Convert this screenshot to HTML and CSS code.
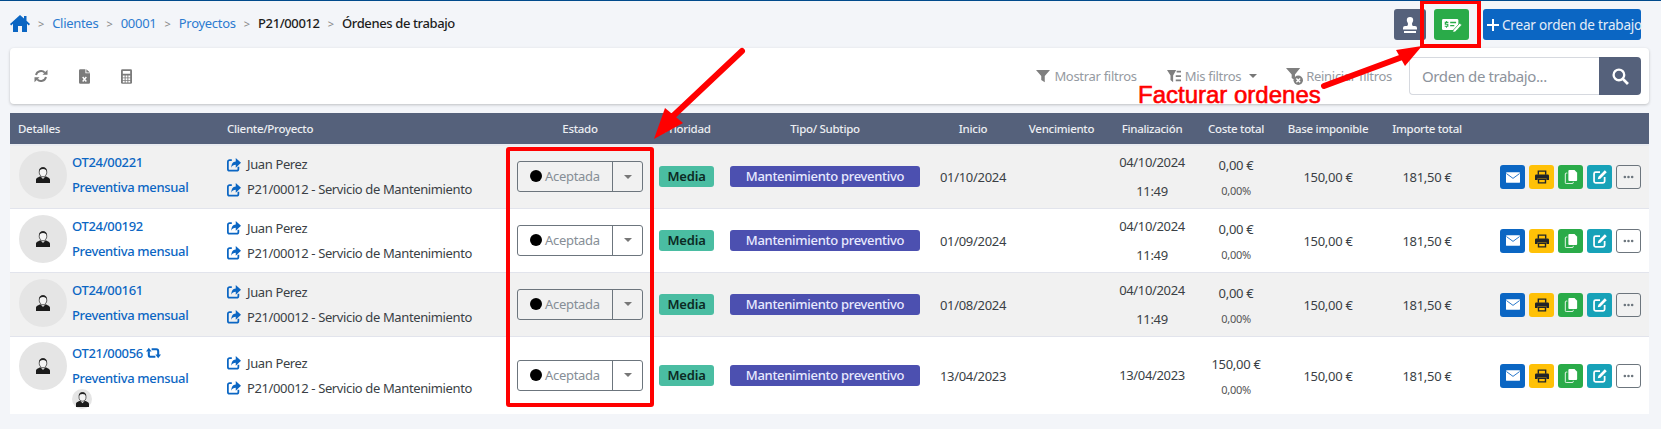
FILE: index.html
```html
<!DOCTYPE html>
<html lang="es">
<head>
    <meta charset="UTF-8">
    <meta name="viewport" content="width=device-width, initial-scale=1.0">
    <title>Órdenes de trabajo</title>
    <link rel="stylesheet" href="styles.css">
</head>
<body>

<svg class="sprite">
    <symbol id="i-home" viewBox="0 0 20 17"><path fill="currentColor" d="M10 0L0 9l1.2 1.4L3 8.8V17h5v-6h4v6h5V8.8l1.8 1.6L20 9l-3.5-3.2V1H14v2.6z"/></symbol>
    <symbol id="i-share" viewBox="0 0 16 16"><path fill="none" stroke="currentColor" stroke-width="2" d="M5.5 2.5H3A2 2 0 0 0 1 4.500v8A2 2 0 0 0 3 14.500h8a2 2 0 0 0 2-2V10"/><path fill="currentColor" d="M10 0l6 5.500-6 5.500V7.800C7.500 7.800 5.800 8.800 5 11c-.2-4 1.700-6.800 5-7z"/></symbol>
    <symbol id="i-retweet" viewBox="0 0 16 14"><path fill="none" stroke="currentColor" stroke-width="2.200" d="M3 5v4a2 2 0 0 0 2 2h5M13 9V5a2 2 0 0 0-2-2H6"/><path fill="currentColor" d="M0 5.500L3 1.500l3 4zM10 8.500l3 4 3-4z"/></symbol>
    <symbol id="i-refresh" viewBox="0 0 14 14"><path fill="none" stroke="currentColor" stroke-width="2" d="M2 6a5.200 5.200 0 0 1 8.800-2.400M12 8a5.200 5.200 0 0 1-8.800 2.400"/><path fill="currentColor" d="M13.500.8v5h-5zM.5 13.200v-5h5z"/></symbol>
    <symbol id="i-xls" viewBox="0 0 12 16"><path fill="currentColor" d="M0 1.500A1.500 1.500 0 0 1 1.500 0H7v4.500h5v10a1.500 1.500 0 0 1-1.500 1.500h-9A1.500 1.500 0 0 1 0 14.500zM8 0l4 3.600H8z"/><path fill="none" stroke="#fff" stroke-width="1.500" d="M4 8.500l4 5M8 8.500l-4 5"/></symbol>
    <symbol id="i-calc" viewBox="0 0 12 16"><rect width="12" height="16" rx="1.500" fill="currentColor"/><path fill="#fff" d="M2 2h8v3H2zM2 7h2v2H2zM5 7h2v2H5zM8 7h2v2H8zM2 10h2v2H2zM5 10h2v2H5zM8 10h2v2H8zM2 13h2v1.500H2zM5 13h2v1.500H5zM8 13h2v1.500H8z"/></symbol>
    <symbol id="i-filter" viewBox="0 0 16 14"><path fill="currentColor" d="M0 0h16L10 7v7L6 11.500V7z"/></symbol>
    <symbol id="i-filter-list" viewBox="0 0 16 14"><path fill="currentColor" d="M0 0h10.500L7 6.500V14l-3-2.500v-5zM11 1h5v2h-5zM10 6h6v2h-6zM10 11h6v2h-6z"/></symbol>
    <symbol id="i-filter-x" viewBox="0 0 18 18"><path fill="currentColor" d="M0 0h15L9.500 7v6L6 10.500V7z"/><circle cx="13" cy="13" r="5" fill="currentColor"/><path fill="none" stroke="#fff" stroke-width="1.500" d="M11 11l4 4M15 11l-4 4"/></symbol>
    <symbol id="i-stamp" viewBox="0 0 14 16"><path fill="currentColor" d="M7 0a3.200 3.200 0 0 0-3.200 3.200C3.800 4.800 5 5.500 5 7c0 .8-.3 1.500-.8 2H2a2 2 0 0 0-2 2v1.500h14V11a2 2 0 0 0-2-2H9.800C9.300 8.500 9 7.800 9 7c0-1.500 1.200-2.200 1.200-3.800A3.200 3.200 0 0 0 7 0zM1 14h12v2H1z"/></symbol>
    <symbol id="i-invoice" viewBox="0 0 22 15"><rect y="1" width="18" height="12" rx="1.500" fill="#fff"/><path fill="#2aab49" d="M9 4h6.500v1.500H9zM9 7.500h4.500V9H9zM4.500 3h1v1h1.500v1.200H4.600v1h2.400v3.300H5.500v1h-1v-1H3V8.300h2.700v-1H3V4h1.500z"/><path fill="#fff" stroke="#2aab49" stroke-width=".8" d="M12.500 13l7-7.500 2.200 2-7 7.500-3 .7z"/></symbol>
    <symbol id="i-mail" viewBox="0 0 16 12"><rect width="16" height="12" rx="1" fill="#fff"/><path fill="none" stroke="#0b66c3" d="M.5 1.500L8 7l7.500-5.500"/></symbol>
    <symbol id="i-print" viewBox="0 0 16 15"><path fill="none" stroke="#212529" stroke-width="1.600" d="M3.800 5V.8h8.400V5M4 10h8v4.200H4z"/><path fill="#212529" d="M1.500 4.500h13A1.500 1.500 0 0 1 16 6v5h-3V9H3v2H0V6a1.500 1.500 0 0 1 1.500-1.500z"/></symbol>
    <symbol id="i-copy" viewBox="0 0 14 16"><path fill="#fff" d="M5 0h6l3 3v8.500a1 1 0 0 1-1 1H5a1 1 0 0 1-1-1V1a1 1 0 0 1 1-1z"/><path fill="none" stroke="#fff" d="M2.800 3.500H1.500a1 1 0 0 0-1 1V14.500a1 1 0 0 0 1 1h7a1 1 0 0 0 1-1V13.500"/></symbol>
    <symbol id="i-edit" viewBox="0 0 16 16"><path fill="none" stroke="#fff" stroke-width="2" d="M8 2.500H3a1.800 1.800 0 0 0-1.800 1.800v8.500A1.800 1.800 0 0 0 3 14.600h8.500a1.800 1.800 0 0 0 1.800-1.800V8"/><path fill="#fff" d="M13.500.4l2.200 2.200-7.300 7.300-3 .8.800-3z"/></symbol>
    <symbol id="i-dots" viewBox="0 0 12 4"><circle cx="2" cy="2" r="1.400" fill="#6c757d"/><circle cx="6" cy="2" r="1.400" fill="#6c757d"/><circle cx="10" cy="2" r="1.400" fill="#6c757d"/></symbol>
    <symbol id="i-user" viewBox="0 0 14 16"><path fill="#1b1b1b" d="M0 16v-3.200C0 10.800 3 10 4.500 9.300L7 12l2.500-2.700c1.500.7 4.500 1.500 4.500 3.500V16z"/><ellipse cx="7" cy="5.200" rx="3.800" ry="4.600" fill="#f4f4f4" stroke="#222" stroke-width=".7"/><path fill="#222" d="M3.200 4.500C2.800 1.500 5 .3 7 .3s4.200 1.200 3.800 4.200C10.300 2.800 9 2 7 2S3.700 2.800 3.200 4.500z"/></symbol>
</svg>

<div class="topbar">
    <nav class="breadcrumb">
        <svg class="home"><use href="#i-home"/></svg>
        <span class="sep">&gt;</span><a>Clientes</a>
        <span class="sep">&gt;</span><a>00001</a>
        <span class="sep">&gt;</span><a>Proyectos</a>
        <span class="sep">&gt;</span><strong>P21/00012</strong>
        <span class="sep">&gt;</span><strong>Órdenes de trabajo</strong>
    </nav>
    <div class="top-actions">
        <button class="btn btn-slate"><svg class="ic-stamp"><use href="#i-stamp"/></svg></button>
        <button class="btn btn-green"><svg class="ic-invoice"><use href="#i-invoice"/></svg></button>
        <button class="btn btn-blue btn-create"><span class="plus"></span>Crear orden de trabajo</button>
    </div>
</div>

<div class="toolbar">
    <div class="tools">
        <svg class="ic-refresh"><use href="#i-refresh"/></svg>
        <svg class="ic-file"><use href="#i-xls"/></svg>
        <svg class="ic-file"><use href="#i-calc"/></svg>
    </div>
    <div class="filters">
        <span class="filter show"><svg class="ic-filter"><use href="#i-filter"/></svg>Mostrar filtros</span>
        <span class="filter mine"><svg class="ic-filter"><use href="#i-filter-list"/></svg>Mis filtros<i class="caret"></i></span>
        <span class="filter reset"><svg class="ic-filter-x"><use href="#i-filter-x"/></svg>Reiniciar filtros</span>
        <div class="search">
            <input type="text" placeholder="Orden de trabajo...">
            <button class="search-btn">
                <svg viewBox="0 0 16 16"><circle cx="6.500" cy="6.500" r="5" fill="none" stroke="#fff" stroke-width="2.200"/><path stroke="#fff" stroke-width="2.600" d="M10 10l5 5"/></svg>
            </button>
        </div>
    </div>
</div>

<table class="orders">
    <colgroup>
        <col class="c-det"><col class="c-cli"><col class="c-est"><col class="c-pri"><col class="c-tip"><col class="c-ini">
        <col class="c-ven"><col class="c-fin"><col class="c-cos"><col class="c-bas"><col class="c-imp"><col class="c-act">
    </colgroup>
    <thead>
        <tr>
            <th class="left">Detalles</th>
            <th class="left">Cliente/Proyecto</th>
            <th>Estado</th>
            <th>Prioridad</th>
            <th>Tipo/ Subtipo</th>
            <th>Inicio</th>
            <th>Vencimiento</th>
            <th>Finalización</th>
            <th>Coste total</th>
            <th>Base imponible</th>
            <th>Importe total</th>
            <th></th>
        </tr>
    </thead>
    <tbody>
        <tr>
            <td class="details">
                <div class="det-wrap">
                    <span class="avatar"><svg><use href="#i-user"/></svg></span>
                    <div class="det-text"><a>OT24/00221</a><a>Preventiva mensual</a></div>
                </div>
            </td>
            <td class="client">
                <div><svg><use href="#i-share"/></svg>Juan Perez</div>
                <div><svg><use href="#i-share"/></svg>P21/00012 - Servicio de Mantenimiento</div>
            </td>
            <td><div class="status"><span class="status-main"><i class="dot"></i>Aceptada</span><span class="status-arrow"><i class="caret"></i></span></div></td>
            <td><span class="badge badge-media">Media</span></td>
            <td><span class="badge badge-type">Mantenimiento preventivo</span></td>
            <td>01/10/2024</td>
            <td></td>
            <td class="date">04/10/2024<br>11:49</td>
            <td class="cost">0,00 €<small>0,00%</small></td>
            <td>150,00 €</td>
            <td>181,50 €</td>
            <td class="actions">
                <div class="act-wrap">
                    <button class="act btn-blue"><svg class="ic-mail"><use href="#i-mail"/></svg></button>
                    <button class="act btn-yellow"><svg class="ic-act"><use href="#i-print"/></svg></button>
                    <button class="act btn-green"><svg class="ic-act"><use href="#i-copy"/></svg></button>
                    <button class="act btn-teal"><svg class="ic-act"><use href="#i-edit"/></svg></button>
                    <button class="act btn-more"><svg class="ic-dots"><use href="#i-dots"/></svg></button>
                </div>
            </td>
        </tr>
        <tr>
            <td class="details">
                <div class="det-wrap">
                    <span class="avatar"><svg><use href="#i-user"/></svg></span>
                    <div class="det-text"><a>OT24/00192</a><a>Preventiva mensual</a></div>
                </div>
            </td>
            <td class="client">
                <div><svg><use href="#i-share"/></svg>Juan Perez</div>
                <div><svg><use href="#i-share"/></svg>P21/00012 - Servicio de Mantenimiento</div>
            </td>
            <td><div class="status"><span class="status-main"><i class="dot"></i>Aceptada</span><span class="status-arrow"><i class="caret"></i></span></div></td>
            <td><span class="badge badge-media">Media</span></td>
            <td><span class="badge badge-type">Mantenimiento preventivo</span></td>
            <td>01/09/2024</td>
            <td></td>
            <td class="date">04/10/2024<br>11:49</td>
            <td class="cost">0,00 €<small>0,00%</small></td>
            <td>150,00 €</td>
            <td>181,50 €</td>
            <td class="actions">
                <div class="act-wrap">
                    <button class="act btn-blue"><svg class="ic-mail"><use href="#i-mail"/></svg></button>
                    <button class="act btn-yellow"><svg class="ic-act"><use href="#i-print"/></svg></button>
                    <button class="act btn-green"><svg class="ic-act"><use href="#i-copy"/></svg></button>
                    <button class="act btn-teal"><svg class="ic-act"><use href="#i-edit"/></svg></button>
                    <button class="act btn-more"><svg class="ic-dots"><use href="#i-dots"/></svg></button>
                </div>
            </td>
        </tr>
        <tr>
            <td class="details">
                <div class="det-wrap">
                    <span class="avatar"><svg><use href="#i-user"/></svg></span>
                    <div class="det-text"><a>OT24/00161</a><a>Preventiva mensual</a></div>
                </div>
            </td>
            <td class="client">
                <div><svg><use href="#i-share"/></svg>Juan Perez</div>
                <div><svg><use href="#i-share"/></svg>P21/00012 - Servicio de Mantenimiento</div>
            </td>
            <td><div class="status"><span class="status-main"><i class="dot"></i>Aceptada</span><span class="status-arrow"><i class="caret"></i></span></div></td>
            <td><span class="badge badge-media">Media</span></td>
            <td><span class="badge badge-type">Mantenimiento preventivo</span></td>
            <td>01/08/2024</td>
            <td></td>
            <td class="date">04/10/2024<br>11:49</td>
            <td class="cost">0,00 €<small>0,00%</small></td>
            <td>150,00 €</td>
            <td>181,50 €</td>
            <td class="actions">
                <div class="act-wrap">
                    <button class="act btn-blue"><svg class="ic-mail"><use href="#i-mail"/></svg></button>
                    <button class="act btn-yellow"><svg class="ic-act"><use href="#i-print"/></svg></button>
                    <button class="act btn-green"><svg class="ic-act"><use href="#i-copy"/></svg></button>
                    <button class="act btn-teal"><svg class="ic-act"><use href="#i-edit"/></svg></button>
                    <button class="act btn-more"><svg class="ic-dots"><use href="#i-dots"/></svg></button>
                </div>
            </td>
        </tr>
        <tr>
            <td class="details">
                <div class="det-wrap">
                    <span class="avatar"><svg><use href="#i-user"/></svg></span>
                    <div class="det-text">
                        <a>OT21/00056 <svg class="ic-retweet"><use href="#i-retweet"/></svg></a>
                        <a>Preventiva mensual</a>
                        <span class="avatar avatar-sm"><svg><use href="#i-user"/></svg></span>
                    </div>
                </div>
            </td>
            <td class="client">
                <div><svg><use href="#i-share"/></svg>Juan Perez</div>
                <div><svg><use href="#i-share"/></svg>P21/00012 - Servicio de Mantenimiento</div>
            </td>
            <td><div class="status"><span class="status-main"><i class="dot"></i>Aceptada</span><span class="status-arrow"><i class="caret"></i></span></div></td>
            <td><span class="badge badge-media">Media</span></td>
            <td><span class="badge badge-type">Mantenimiento preventivo</span></td>
            <td>13/04/2023</td>
            <td></td>
            <td class="date">13/04/2023</td>
            <td class="cost">150,00 €<small>0,00%</small></td>
            <td>150,00 €</td>
            <td>181,50 €</td>
            <td class="actions">
                <div class="act-wrap">
                    <button class="act btn-blue"><svg class="ic-mail"><use href="#i-mail"/></svg></button>
                    <button class="act btn-yellow"><svg class="ic-act"><use href="#i-print"/></svg></button>
                    <button class="act btn-green"><svg class="ic-act"><use href="#i-copy"/></svg></button>
                    <button class="act btn-teal"><svg class="ic-act"><use href="#i-edit"/></svg></button>
                    <button class="act btn-more"><svg class="ic-dots"><use href="#i-dots"/></svg></button>
                </div>
            </td>
        </tr>
    </tbody>
</table>

<!-- red marks drawn over the capture -->
<svg class="marks" viewBox="0 0 1661 429">
    <rect x="508" y="149" width="144" height="256" rx="1" fill="none" stroke="#f00" stroke-width="4"/>
    <rect x="1422" y="2" width="57" height="44" fill="none" stroke="#f00" stroke-width="4"/>
    <path d="M742 51L672 117" stroke="#f00" stroke-width="6" stroke-linecap="round"/>
    <path d="M654 139L665 108L683 123z" fill="#f00"/>
    <path d="M1324 86L1405 56" stroke="#f00" stroke-width="6" stroke-linecap="round"/>
    <path d="M1422 46L1396 50L1405 66z" fill="#f00"/>
</svg>
<span class="mark-label">Facturar ordenes</span>

</body>
</html>
```

FILE: styles.css
```css
* {
    box-sizing: border-box;
}
body {
    margin: 0;
    padding: 0 12px 14px 10px;
    background-color: #f3f5f9;
    border-top: 1px solid #004a8c;
    font-family: "Noto Sans", sans-serif;
    font-size: 13px;
    letter-spacing: -0.3px;
    color: #343a40;
    position: relative;
}
svg {
    display: block;
}
button {
    border: none;
    padding: 0;
    font: inherit;
    letter-spacing: inherit;
    display: flex;
    align-items: center;
    justify-content: center;
}
.sprite {
    display: none;
}

/* top bar */
.topbar {
    display: flex;
    justify-content: space-between;
    align-items: center;
    height: 47px;
}
.breadcrumb {
    display: flex;
    align-items: center;
    padding-bottom: 3px;
}
.breadcrumb a {
    color: #2c7bd0;
}
.breadcrumb strong {
    color: #1d1d1d;
    font-weight: 500;
    letter-spacing: -0.38px;
}
.home {
    width: 20px;
    height: 17px;
    color: #0b66c3;
    margin-right: 8px;
}
.sep {
    color: #888;
    margin: 0 8.200px;
    font-size: 11px;
}
.home + .sep {
    margin-left: 0;
}
.top-actions {
    display: flex;
    gap: 8px;
    margin-right: 8px;
}
.btn {
    height: 31px;
    border-radius: 3px;
    color: #fff;
}
.btn-slate {
    width: 32px;
    background-color: #55617b;
}
.btn-green {
    width: 35px;
    background-color: #2aab49;
}
.btn-blue {
    background-color: #0b66c3;
}
.btn-yellow {
    background-color: #ffc107;
}
.btn-teal {
    background-color: #17a2b8;
}
.btn-create {
    width: 158px;
    margin-left: 6px;
    justify-content: flex-start;
    padding-left: 4px;
    font-size: 13.500px;
    letter-spacing: -0.18px;
    white-space: nowrap;
    color: #e4edf8;
}
.plus {
    width: 12px;
    height: 12px;
    margin-right: 3px;
    flex-shrink: 0;
    background:
        linear-gradient(#fff, #fff) center / 100% 2px no-repeat,
        linear-gradient(#fff, #fff) center / 2px 100% no-repeat;
}
.ic-stamp {
    width: 14px;
    height: 16px;
}
.ic-invoice {
    width: 20px;
    height: 14px;
}

/* toolbar card */
.toolbar {
    height: 56px;
    background-color: #fff;
    border-radius: 4px;
    box-shadow: 0 1px 3px rgba(0, 0, 0, 0.22);
    display: flex;
    justify-content: space-between;
    align-items: center;
    padding: 0 8px 0 24px;
}
.tools {
    display: flex;
    align-items: center;
    gap: 31px;
    color: #7b7b7b;
}
.ic-refresh {
    width: 14px;
    height: 14px;
}
.ic-file {
    width: 11px;
    height: 15px;
}
.filters {
    display: flex;
    align-items: center;
    color: #959aa1;
}
.filter {
    display: flex;
    align-items: center;
}
.show {
    margin-right: 30px;
}
.mine {
    margin-right: 29px;
}
.reset {
    margin-right: 17px;
}
.ic-filter {
    width: 14px;
    height: 14px;
    color: #7f7f7f;
    margin-right: 4px;
}
.ic-filter-x {
    width: 17px;
    height: 17px;
    color: #7f7f7f;
    margin-right: 3px;
}
.caret {
    display: inline-block;
    width: 0;
    height: 0;
    border: 4px solid transparent;
    border-top: 4px solid #777;
    border-bottom: none;
}
.mine .caret {
    margin-left: 8px;
}
.search {
    display: flex;
    width: 232px;
    height: 38px;
}
.search input {
    width: 190px;
    height: 38px;
    border: 1px solid #d6d9df;
    border-right: none;
    border-radius: 4px 0 0 4px;
    padding: 0 12px;
    font: inherit;
    font-size: 15px;
    letter-spacing: -0.4px;
    outline: none;
}
.search input::placeholder {
    color: #8d939c;
}
.search-btn {
    width: 42px;
    height: 38px;
    background-color: #55617b;
    border-radius: 0 4px 4px 0;
}
.search-btn svg {
    width: 17px;
    height: 17px;
}

/* table */
.orders {
    width: 1639px;
    margin-top: 9px;
    table-layout: fixed;
    border-collapse: separate;
    border-spacing: 0;
    background-color: #fff;
}
.c-det { width: 209px; }
.c-cli { width: 288px; }
.c-est { width: 146px; }
.c-pri { width: 67px; }
.c-tip { width: 210px; }
.c-ini { width: 86px; }
.c-ven { width: 91px; }
.c-fin { width: 90px; }
.c-cos { width: 78px; }
.c-bas { width: 106px; }
.c-imp { width: 92px; }
.c-act { width: 176px; }
.orders th {
    height: 33px;
    background-color: #55617b;
    border-bottom: 2px solid #e9ebf0;
    color: #eceef2;
    font-size: 11.500px;
    font-weight: 500;
    letter-spacing: -0.3px;
    text-align: center;
    padding: 0;
}
.orders th.left {
    text-align: left;
}
.orders th:first-child {
    padding-left: 8px;
}
.orders th:nth-child(2) {
    padding-left: 8px;
}
.orders td {
    padding: 0;
    text-align: center;
    vertical-align: middle;
    border-bottom: 1px solid #e2e4ec;
    color: #3a3f45;
}
.orders tbody tr:nth-child(odd) td {
    background-color: #f1f1f1;
}
.orders tbody tr:last-child td {
    background-color: #fff;
    border-bottom: none;
}
.orders td.details {
    text-align: left;
    vertical-align: top;
    padding: 6px 0 9px 9px;
}
.orders tbody tr:first-child td.details {
    padding-top: 5px;
}
.orders tbody tr:last-child td.details {
    padding: 5px 0 5px 9px;
}
.det-wrap {
    display: flex;
    gap: 5px;
}
.det-text {
    margin-top: -1px;
}
.avatar {
    width: 48px;
    height: 48px;
    border-radius: 50%;
    background-color: #e5e5e5;
    display: flex;
    align-items: center;
    justify-content: center;
    flex-shrink: 0;
}
.avatar svg {
    width: 14px;
    height: 16px;
}
.avatar-sm {
    width: 20px;
    height: 20px;
}
.avatar-sm svg {
    width: 13px;
    height: 15px;
}
.det-text a {
    display: flex;
    align-items: center;
    gap: 3px;
    height: 23px;
    margin-bottom: 2px;
    color: #0b66c3;
    font-weight: 500;
    letter-spacing: -0.33px;
}
.det-text a + a {
    margin-bottom: 0;
}
.ic-retweet {
    width: 15px;
    height: 14px;
    color: #0b66c3;
}
.orders td.client {
    text-align: left;
    padding-left: 8px;
    line-height: 25px;
    letter-spacing: -0.38px;
}
.client div {
    display: flex;
    align-items: center;
    gap: 6px;
    height: 25px;
}
.client svg {
    width: 14px;
    height: 14px;
    color: #0b66c3;
    flex-shrink: 0;
}
.status {
    width: 126px;
    height: 31px;
    margin: -1px auto 0;
    display: flex;
    border: 1px solid #6c757d;
    border-radius: 3px;
    color: #868e96;
}
.status-main {
    width: 94px;
    display: flex;
    align-items: center;
    padding-left: 12px;
    gap: 3px;
    padding-bottom: 1px;
}
.dot {
    width: 12px;
    height: 12px;
    border-radius: 50%;
    background-color: #000;
}
.status-arrow {
    flex: 1;
    border-left: 1px solid #6c757d;
    display: flex;
    align-items: center;
    justify-content: center;
}
.badge {
    display: block;
    height: 21px;
    line-height: 20px;
    margin: -1px auto 0;
    border-radius: 3px;
    font-weight: 500;
}
.badge-media {
    width: 55px;
    background-color: #4abda2;
    color: #0c2a24;
    font-weight: 600;
    letter-spacing: -0.2px;
}
.badge-type {
    width: 190px;
    background-color: #4c50b0;
    color: #e8eaff;
    letter-spacing: -0.3px;
}
.orders td.date {
    line-height: 29px;
    letter-spacing: -0.35px;
}
.cost {
    line-height: 26px;
}
.orders td.cost {
    padding-top: 2px;
}
.cost small {
    display: block;
    font-size: 11px;
    color: #555;
}
.act-wrap {
    display: flex;
    gap: 4px;
    justify-content: flex-end;
    padding-right: 8px;
}
.act {
    width: 25px;
    height: 24px;
    border-radius: 3px;
}
.btn-more {
    background: none;
    border: 1px solid #6c757d;
}
.ic-mail {
    width: 14px;
    height: 11px;
}
.ic-act {
    width: 14px;
    height: 14px;
}
.ic-dots {
    width: 11px;
    height: 4px;
}

/* annotations */
.marks {
    position: absolute;
    left: 0;
    top: -1px;
    width: 1661px;
    height: 429px;
    pointer-events: none;
}
.mark-label {
    position: absolute;
    left: 1138px;
    top: 80px;
    font-family: "Liberation Sans", sans-serif;
    font-size: 24px;
    line-height: 28px;
    letter-spacing: 0;
    color: #f00;
    -webkit-text-stroke: 0.6px #f00;
}
```
